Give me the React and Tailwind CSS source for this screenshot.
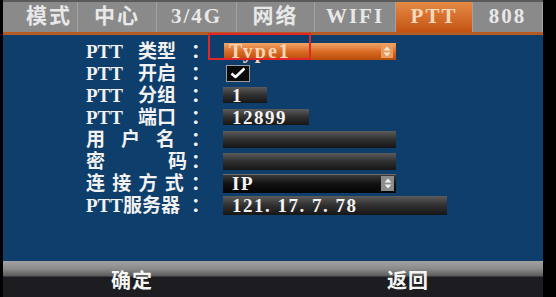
import React from 'react';

const font = { fontFamily: '"Liberation Serif", "Noto Sans CJK SC", serif' };

const tabs = [
  { label: '模式', w: 'w-[75px]', first: true },
  { label: '中心', w: 'w-[79px]' },
  { label: '3/4G', w: 'w-[80px]' },
  { label: '网络', w: 'w-[78px]' },
  { label: 'WIFI', w: 'w-[81px]' },
  { label: 'PTT', w: 'w-[77px]', active: true },
  { label: '808', w: 'w-[70px]' },
];

function Label({ parts }) {
  return (
    <div className="ml-[83px] flex w-[117px] items-center justify-between text-[19px] font-bold leading-none text-[#f2f2f2]">
      {parts.map((p, i) => (
        <span key={i} className={p === '：' ? 'w-[12px] overflow-visible whitespace-nowrap' : 'whitespace-nowrap'}>
          {p}
        </span>
      ))}
    </div>
  );
}

function Field({ w, h = 'h-[16px]', children }) {
  return (
    <div className={`${w} ${h} flex items-center bg-linear-to-b from-[#5c5c5c] via-[#303030] to-[#161616] pl-[9px] text-[19px] font-bold leading-none tracking-[1.5px] text-[#f4f4f4]`}>
      {children}
    </div>
  );
}

function Spinner({ color }) {
  return (
    <svg width="8" height="11" viewBox="0 0 8 11" className="shrink-0">
      <path d="M4 0.5 L7.5 4.5 H0.5 Z" fill={color} />
      <path d="M4 10.5 L7.5 6.5 H0.5 Z" fill={color} />
    </svg>
  );
}

function Row({ children }) {
  return <div className="flex h-[22px] items-center">{children}</div>;
}

export default function App() {
  return (
    <div className="flex h-[297px] w-[556px] bg-black" style={font}>
      <div className="ml-[3px] flex w-[540px] flex-col">
        {/* tab bar */}
        <div className="flex h-[32px] border-t-2 border-[#5a5a5a] bg-[#8a8a8a]">
          {tabs.map((t) => (
            <div
              key={t.label}
              className={`${t.w} flex items-center border-r border-[#a2a2a2] text-[21px] font-bold tracking-[2px] ${
                t.first ? 'justify-start pl-[23px]' : 'justify-center'
              } ${t.active ? 'bg-linear-to-b from-[#e58a45] to-[#c45210] text-[#f7d9bd]' : 'text-[#e8e8e8]'}`}
            >
              {t.label}
            </div>
          ))}
        </div>
        <div className="h-[3px] bg-[#b55a22]" />

        {/* body */}
        <div className="relative flex-1 bg-[#0e3e6c] pt-[5px]">
          <Row>
            <Label parts={['PTT', '类型', '：']} />
            <div className="ml-[21px] flex h-[17px] w-[172px] items-center justify-between bg-linear-to-b from-[#f2a468] via-[#d86c24] to-[#b94c06] pl-[5px] pr-[3px]">
              <span className="text-[20px] font-bold leading-none tracking-[2px] text-[#fbd6b4]">Type1</span>
              <div className="flex h-[13px] w-[12px] items-center justify-center bg-[#e99a5c]">
                <Spinner color="#fde9d6" />
              </div>
            </div>
          </Row>
          <Row>
            <Label parts={['PTT', '开启', '：']} />
            <div className="ml-[23px] flex h-[17px] w-[24px] items-center justify-center border border-[#9a9a9a] bg-[#0a0a0a]">
              <svg width="16" height="12" viewBox="0 0 16 12">
                <path d="M1.5 6.5 L5.5 10 L14.5 1.5" fill="none" stroke="#ffffff" strokeWidth="2.6" strokeLinejoin="round" />
              </svg>
            </div>
          </Row>
          <Row>
            <Label parts={['PTT', '分组', '：']} />
            <div className="ml-[20px]">
              <Field w="w-[44px]">1</Field>
            </div>
          </Row>
          <Row>
            <Label parts={['PTT', '端口', '：']} />
            <div className="ml-[20px]">
              <Field w="w-[86px]">12899</Field>
            </div>
          </Row>
          <Row>
            <Label parts={['用', '户', '名', '：']} />
            <div className="ml-[20px]">
              <Field w="w-[173px]" h="h-[17px]" />
            </div>
          </Row>
          <Row>
            <div className="ml-[83px] flex w-[117px] items-center text-[19px] font-bold leading-none text-[#f2f2f2]">
              <span>密</span>
              <span className="flex-1" />
              <span>码</span>
              <span className="ml-[4px] w-[12px]">：</span>
            </div>
            <div className="ml-[20px]">
              <Field w="w-[173px]" h="h-[17px]" />
            </div>
          </Row>
          <Row>
            <Label parts={['连', '接', '方', '式', '：']} />
            <div className="ml-[20px] flex h-[19px] w-[173px] items-center justify-between border-t border-[#6a6a6a] bg-linear-to-b from-[#3a3a3a] via-[#111111] to-[#050505] pl-[9px] pr-[2px]">
              <span className="text-[19px] font-bold leading-none tracking-[1.5px] text-[#f4f4f4]">IP</span>
              <div className="flex h-[15px] w-[13px] items-center justify-center bg-[#8c8c8c]">
                <Spinner color="#f0f0f0" />
              </div>
            </div>
          </Row>
          <Row>
            <Label parts={['PTT服务器', '：']} />
            <div className="ml-[20px]">
              <Field w="w-[224px]" h="h-[19px]">121. 17. 7. 78</Field>
            </div>
          </Row>

          {/* highlight frame */}
          <div className="absolute left-[205px] top-[-2px] h-[27px] w-[103px] rounded-[1px] border-2 border-[#e3262a]" />
        </div>

        {/* footer */}
        <div className="flex h-[36px] bg-[linear-gradient(to_bottom,#a3a3a3_0px,#8a8a8a_8px,#5a5a5a_15px,#1d1d21_16px,#1d1d21_100%)] pt-[4px] text-[20px] font-bold text-[#f4f4f4]">
          <div className="flex w-1/2 items-center justify-center pr-[12px] tracking-[1px]">确定</div>
          <div className="flex w-1/2 items-center justify-center tracking-[1px]">返回</div>
        </div>
      </div>
    </div>
  );
}
